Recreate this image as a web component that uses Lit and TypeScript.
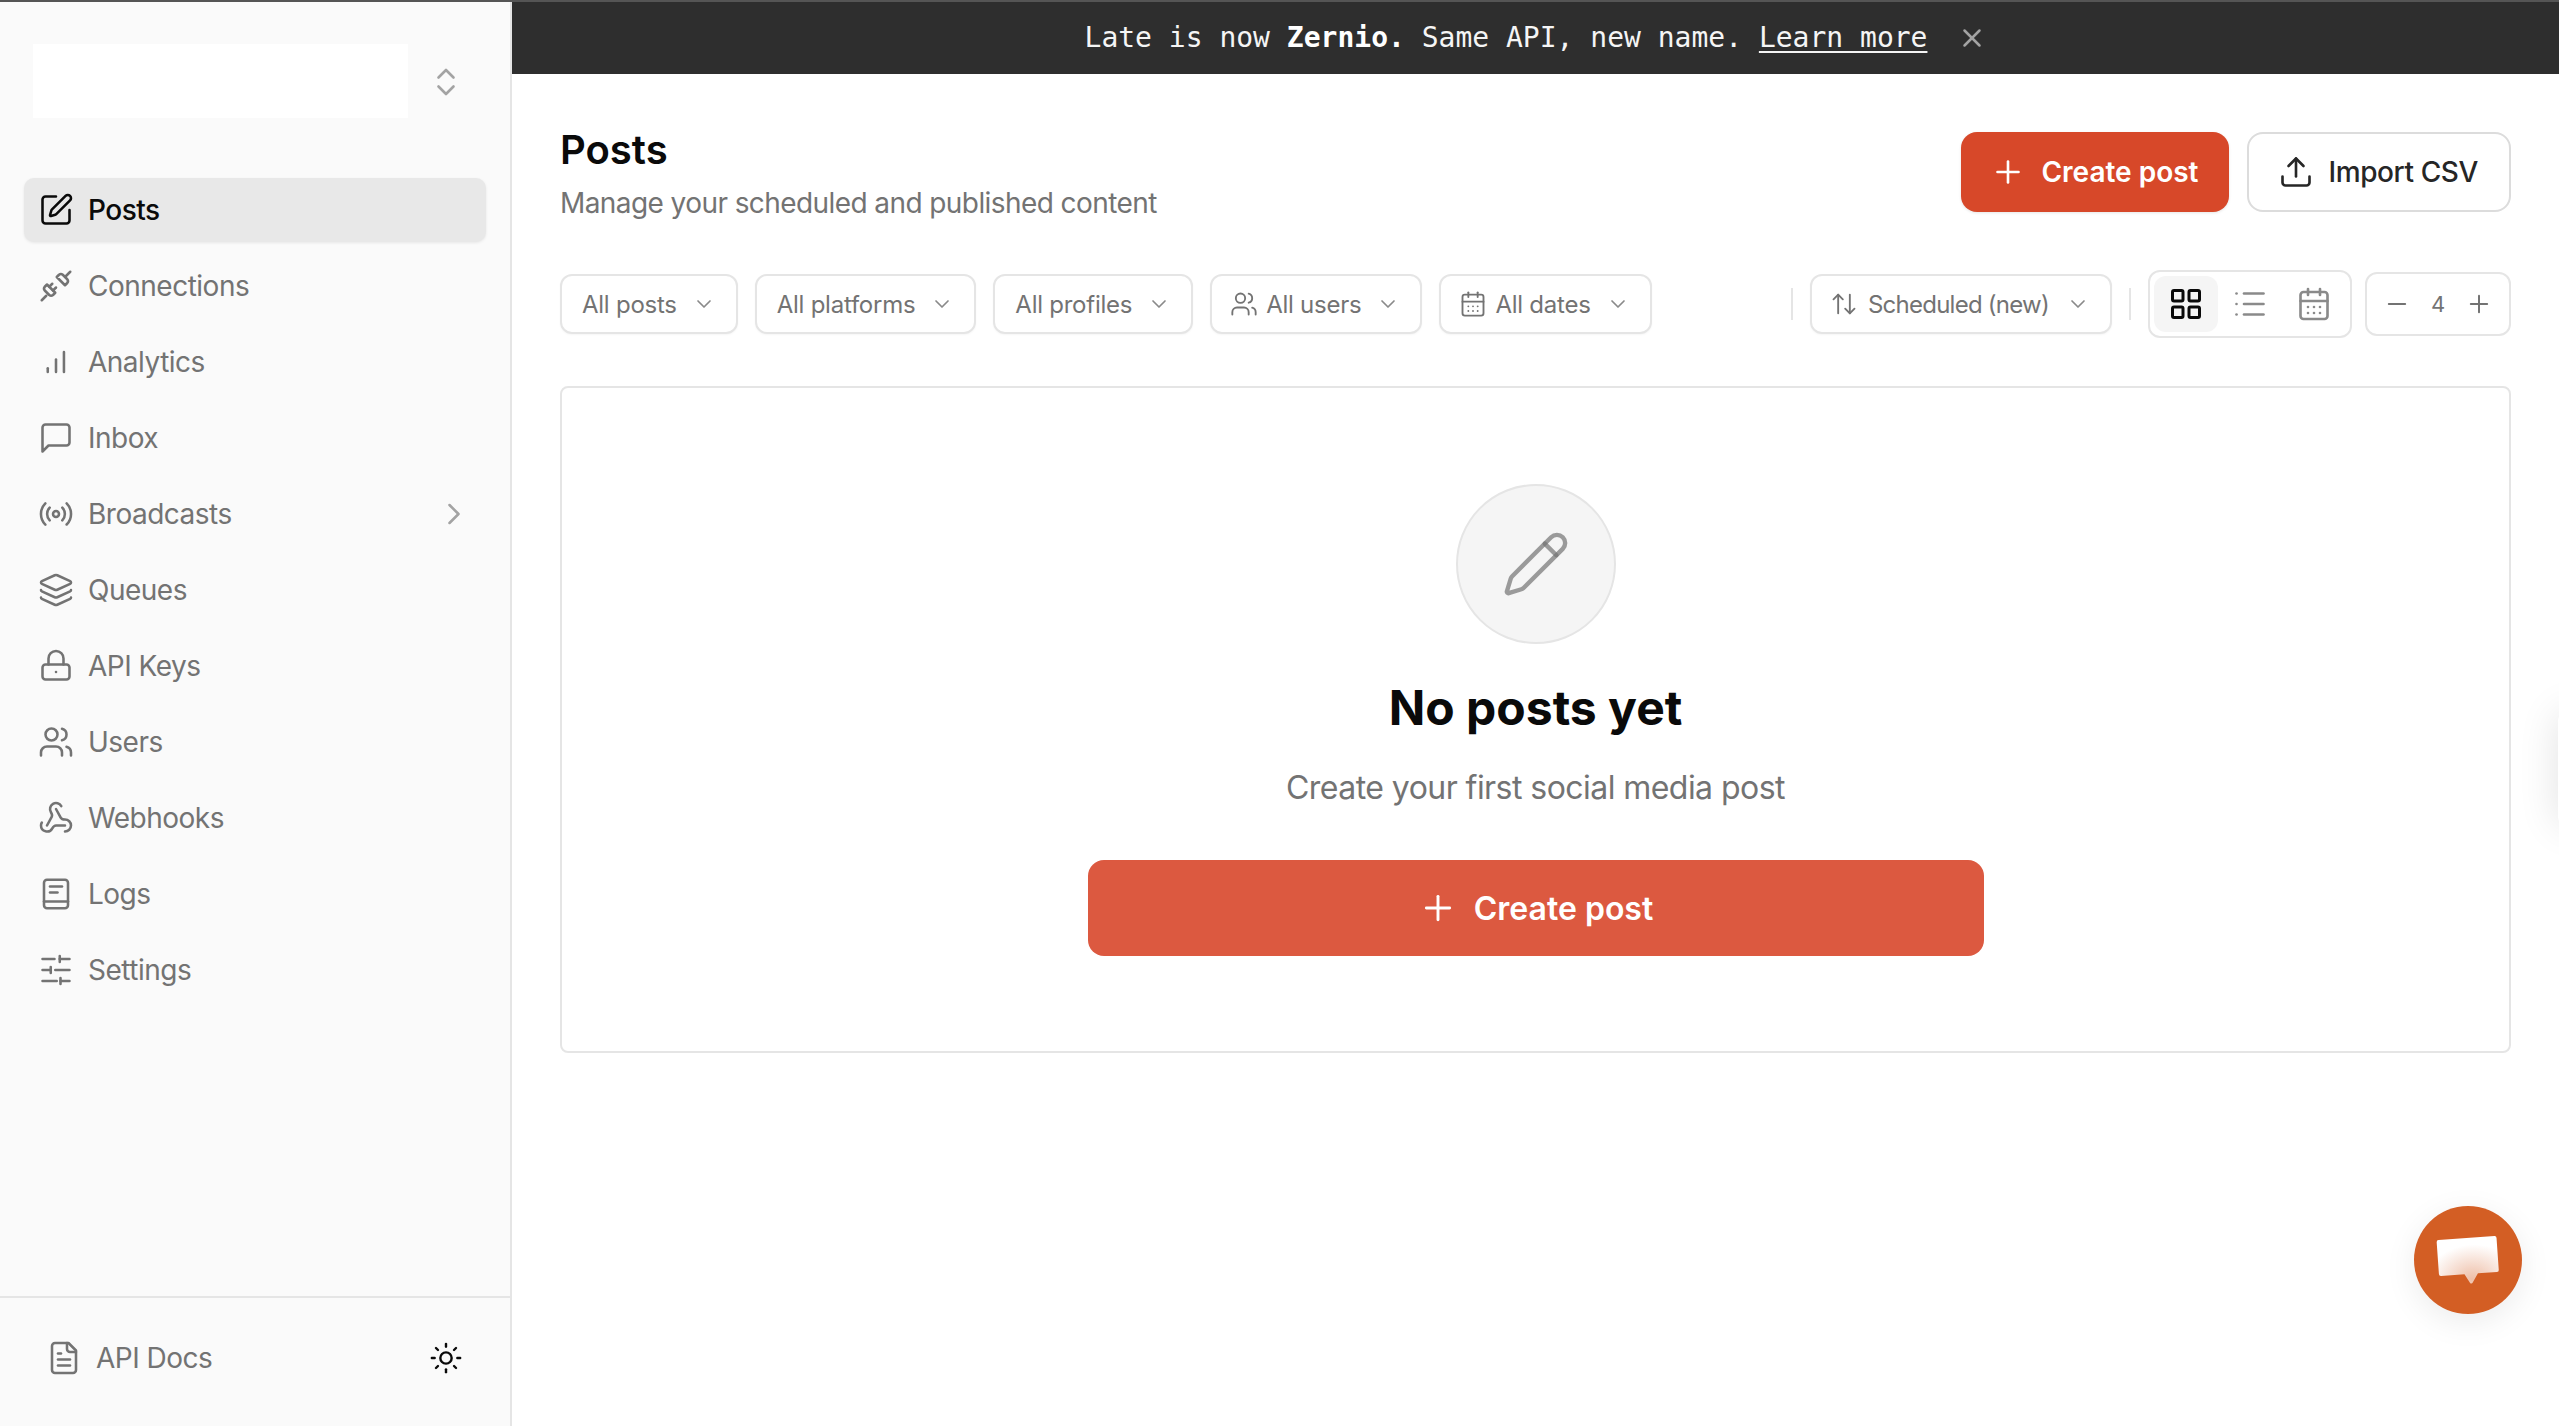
import { LitElement, html, svg, css, SVGTemplateResult } from 'lit';
import { customElement } from 'lit/decorators.js';

const icons: Record<string, SVGTemplateResult> = {
  pen: svg`<path d="M12 3H5a2 2 0 0 0-2 2v14a2 2 0 0 0 2 2h14a2 2 0 0 0 2-2v-7"/><path d="M18.375 2.625a1 1 0 0 1 3 3l-9.013 9.014a2 2 0 0 1-.853.505l-2.873.84a.5.5 0 0 1-.62-.62l.84-2.873a2 2 0 0 1 .506-.852z"/>`,
  plug: svg`<path d="M12.500 6l5.500 5.500 1.500-1.500a2 2 0 0 0 0-2.500l-3-3a2 2 0 0 0-2.500 0z"/><path d="M18.500 5.500l3-3"/><path d="M6 11l5.500 5.500-1.500 1.500a2 2 0 0 1-2.500 0l-3-3a2 2 0 0 1 0-2.500z"/><path d="M5.500 18.500l-3 3"/><path d="M7.500 12.500l2-2"/><path d="M10 15l2-2"/>`,
  chart: svg`<path d="M6.500 18.700v-2.600"/><path d="M12 18.700v-8.400"/><path d="M17.300 18.700V5.300"/>`,
  message: svg`<path d="M21 15a2 2 0 0 1-2 2H7l-4 4V5a2 2 0 0 1 2-2h14a2 2 0 0 1 2 2z"/>`,
  radio: svg`<path d="M4.9 19.1C1 15.2 1 8.8 4.9 4.9"/><path d="M7.8 16.2c-2.3-2.3-2.3-6.1 0-8.5"/><circle cx="12" cy="12" r="2"/><path d="M16.2 7.8c2.3 2.3 2.3 6.1 0 8.5"/><path d="M19.1 4.9C23 8.8 23 15.1 19.1 19"/>`,
  layers: svg`<path d="M12.83 2.18a2 2 0 0 0-1.66 0L2.6 6.08a1 1 0 0 0 0 1.83l8.58 3.91a2 2 0 0 0 1.66 0l8.58-3.9a1 1 0 0 0 0-1.83z"/><path d="M2 12a1 1 0 0 0 .58.91l8.6 3.91a2 2 0 0 0 1.65 0l8.58-3.9A1 1 0 0 0 22 12"/><path d="M2 17a1 1 0 0 0 .58.91l8.6 3.91a2 2 0 0 0 1.65 0l8.58-3.9A1 1 0 0 0 22 17"/>`,
  lock: svg`<rect x="3" y="11" width="18" height="10" rx="2"/><path d="M7 11V7a5 5 0 0 1 10 0v4"/><path d="M12 16h.01"/>`,
  users: svg`<path d="M16 21v-2a4 4 0 0 0-4-4H6a4 4 0 0 0-4 4v2"/><circle cx="9" cy="7" r="4"/><path d="M22 21v-2a4 4 0 0 0-3-3.87"/><path d="M16 3.13a4 4 0 0 1 0 7.75"/>`,
  webhook: svg`<path d="M18 16.98h-5.99c-1.1 0-1.95.94-2.48 1.9A4 4 0 0 1 2 17c.01-.7.2-1.4.57-2"/><path d="m6 17 3.13-5.78c.53-.97.1-2.18-.5-3.1a4 4 0 1 1 6.89-4.06"/><path d="m12 6 3.13 5.73C15.66 12.7 16.9 13 18 13a4 4 0 0 1 0 8"/>`,
  logs: svg`<rect x="4" y="2.500" width="16" height="19" rx="2"/><path d="M4 17h16"/><path d="M8 7h8"/><path d="M8 11h5"/>`,
  sliders: svg`<path d="M3 4.700h8"/><path d="M14.500 2.700v4"/><path d="M14.500 4.700h6.500"/><path d="M3 12h5.500"/><path d="M8.500 10v4"/><path d="M11.500 12h9.500"/><path d="M3 19.300h9.500"/><path d="M15 17.300v4"/><path d="M15 19.300h6"/>`,
  doc: svg`<path d="M15 2H6a2 2 0 0 0-2 2v16a2 2 0 0 0 2 2h12a2 2 0 0 0 2-2V7z"/><path d="M14 2v4a2 2 0 0 0 2 2h4"/><path d="M10 9H8"/><path d="M16 13H8"/><path d="M16 17H8"/>`,
  sun: svg`<circle cx="12" cy="12" r="4"/><path d="M12 2v2"/><path d="M12 20v2"/><path d="m4.93 4.93 1.41 1.41"/><path d="m17.66 17.66 1.41 1.41"/><path d="M2 12h2"/><path d="M20 12h2"/><path d="m6.34 17.66-1.41 1.41"/><path d="m19.07 4.93-1.41 1.41"/>`,
  updown: svg`<path d="m7 9 5-5 5 5"/><path d="m7 15 5 5 5-5"/>`,
  right: svg`<path d="m9 18 6-6-6-6"/>`,
  down: svg`<path d="m6 9 6 6 6-6"/>`,
  x: svg`<path d="M18 6 6 18"/><path d="m6 6 12 12"/>`,
  plus: svg`<path d="M5 12h14"/><path d="M12 5v14"/>`,
  minus: svg`<path d="M5 12h14"/>`,
  upload: svg`<path d="M21 15v4a2 2 0 0 1-2 2H5a2 2 0 0 1-2-2v-4"/><path d="m17 8-5-5-5 5"/><path d="M12 3v12"/>`,
  calendar: svg`<path d="M8 2v4"/><path d="M16 2v4"/><rect x="3" y="4" width="18" height="18" rx="2"/><path d="M3 10h18"/><path d="M8 14h.01"/><path d="M12 14h.01"/><path d="M16 14h.01"/><path d="M8 18h.01"/><path d="M12 18h.01"/><path d="M16 18h.01"/>`,
  sort: svg`<path d="m21 16-4 4-4-4"/><path d="M17 20V4"/><path d="m3 8 4-4 4 4"/><path d="M7 4v16"/>`,
  grid: svg`<rect x="3" y="3" width="7" height="7" rx="1"/><rect x="14" y="3" width="7" height="7" rx="1"/><rect x="14" y="14" width="7" height="7" rx="1"/><rect x="3" y="14" width="7" height="7" rx="1"/>`,
  list: svg`<path d="M3 5h.01"/><path d="M3 12h.01"/><path d="M3 19h.01"/><path d="M8 5h13"/><path d="M8 12h13"/><path d="M8 19h13"/>`,
  pencil: svg`<path d="M21.174 6.812a1 1 0 0 0-3.986-3.987L3.842 16.174a2 2 0 0 0-.5.83l-1.321 4.352a.5.5 0 0 0 .623.622l4.353-1.32a2 2 0 0 0 .83-.497z"/><path d="m15 5 4 4"/>`,
};

const icon = (name: string, cls = '') =>
  html`<svg class="icon ${cls}" viewBox="0 0 24 24" fill="none" stroke="currentColor" stroke-width="2" stroke-linecap="round" stroke-linejoin="round">${icons[name]}</svg>`;

const navItems = [
  { label: 'Posts', icon: 'pen', active: true },
  { label: 'Connections', icon: 'plug' },
  { label: 'Analytics', icon: 'chart' },
  { label: 'Inbox', icon: 'message' },
  { label: 'Broadcasts', icon: 'radio', more: true },
  { label: 'Queues', icon: 'layers' },
  { label: 'API Keys', icon: 'lock' },
  { label: 'Users', icon: 'users' },
  { label: 'Webhooks', icon: 'webhook' },
  { label: 'Logs', icon: 'logs' },
  { label: 'Settings', icon: 'sliders' },
];

const filters = [
  { label: 'All posts' },
  { label: 'All platforms' },
  { label: 'All profiles' },
  { label: 'All users', icon: 'users' },
  { label: 'All dates', icon: 'calendar' },
];

@customElement('app-root')
export class AppRoot extends LitElement {
  static styles = css`
    :host {
      display: block;
      height: 1426px;
      overflow: hidden;
      background: #fff;
      color: #0a0a0a;
      font-family: Inter, 'Liberation Sans', sans-serif;
      border-top: 2px solid #555;
      box-sizing: border-box;
    }

    * {
      box-sizing: border-box;
    }

    .icon {
      width: 36px;
      height: 36px;
      flex: none;
      display: block;
    }

    .icon.sm {
      width: 28px;
      height: 28px;
    }

    .layout {
      display: flex;
      height: 100%;
    }

    .sidebar {
      width: 512px;
      flex: none;
      display: flex;
      flex-direction: column;
      background: #fafafa;
      border-right: 2px solid #e5e5e5;
    }

    .brand {
      display: flex;
      align-items: flex-start;
      padding: 42px 0 0 33px;
      height: 176px;
    }

    .logo {
      width: 375px;
      height: 74px;
      background: #fff;
    }

    .switch {
      margin: 20px 0 0 20px;
      color: #a3a3a3;
      stroke-width: 1.75;
    }

    .nav {
      flex: 1;
      display: flex;
      flex-direction: column;
      gap: 12px;
      padding: 0 24px;
    }

    .item {
      height: 64px;
      display: flex;
      align-items: center;
      gap: 14px;
      padding: 0 14px;
      border-radius: 10px;
      font-size: 28px;
      letter-spacing: -0.5px;
      color: #737373;
    }

    .item .icon {
      stroke-width: 1.7;
    }

    .item.active {
      background: #e8e8e8;
      color: #0a0a0a;
      font-weight: 500;
      box-shadow: 0 1px 3px rgba(0, 0, 0, 0.08);
    }

    .item .more {
      margin-left: auto;
      color: #a3a3a3;
    }

    .foot {
      height: 130px;
      border-top: 2px solid #e5e5e5;
      display: flex;
      align-items: center;
      padding: 0 47px 8px 46px;
      font-size: 28px;
      letter-spacing: -0.5px;
      color: #737373;
      gap: 14px;
    }

    .foot .icon {
      stroke-width: 1.7;
    }

    .foot .sun {
      width: 34px;
      height: 34px;
      margin-left: auto;
      color: #0a0a0a;
    }

    .main {
      flex: 1;
      min-width: 0;
      display: flex;
      flex-direction: column;
    }

    .banner {
      height: 72px;
      flex: none;
      display: flex;
      align-items: center;
      justify-content: center;
      gap: 30px;
      padding: 0 0 1px 1px;
      background: #2e2e2e;
      color: #f5f5f5;
      font-family: 'DejaVu Sans Mono', monospace;
      font-size: 28px;
    }

    .banner b {
      color: #fff;
    }

    .banner a {
      color: inherit;
      text-decoration: underline;
      text-underline-offset: 4px;
    }

    .banner .icon {
      width: 30px;
      height: 30px;
      color: #a3a3a3;
    }

    .content {
      padding: 58px 48px 0;
    }

    .header {
      display: flex;
      justify-content: space-between;
      align-items: flex-start;
      height: 80px;
    }

    h1 {
      margin: -4px 0 0;
      font-size: 40px;
      line-height: 44px;
      font-weight: 600;
    }

    .subtitle {
      margin: 11px 0 0;
      font-size: 28px;
      line-height: 40px;
      letter-spacing: -0.58px;
      color: #737373;
    }

    .actions {
      display: flex;
      gap: 18px;
    }

    .btn {
      height: 80px;
      display: flex;
      align-items: center;
      border-radius: 16px;
      font-size: 28px;
    }

    .btn .icon {
      stroke-width: 1.75;
    }

    .btn.primary {
      gap: 15px;
      padding: 0 30px 0 29px;
      background: #d74829;
      color: #fff;
      font-weight: 600;
      box-shadow: 0 1px 3px rgba(0, 0, 0, 0.1);
    }

    .btn.outline {
      gap: 15px;
      padding: 0 31px 0 29px;
      background: #fff;
      border: 2px solid #dcdcdc;
      color: #262626;
      font-weight: 500;
      letter-spacing: -0.4px;
    }

    .toolbar {
      display: flex;
      align-items: center;
      height: 68px;
      margin-top: 58px;
      gap: 17px;
    }

    .select {
      height: 60px;
      display: flex;
      align-items: center;
      gap: 8px;
      padding: 0 20px;
      background: #fff;
      border: 2px solid #e5e5e5;
      border-radius: 12px;
      font-size: 24px;
      letter-spacing: -0.25px;
      color: #737373;
      box-shadow: 0 1px 2px rgba(0, 0, 0, 0.04);
    }

    .select .icon.sm {
      stroke-width: 1.6;
    }

    .select.with-icon {
      padding-left: 18px;
    }

    .select.sort {
      gap: 10px;
      letter-spacing: -0.75px;
    }

    .select .chev {
      width: 24px;
      height: 24px;
      margin-left: 7px;
      color: #8a8a8a;
      stroke-width: 1.7;
    }

    .spacer {
      flex: 1;
    }

    .sep {
      width: 2px;
      height: 32px;
      background: #e5e5e5;
    }

    .views {
      height: 68px;
      display: flex;
      padding: 4px;
      background: #fff;
      border: 2px solid #e5e5e5;
      border-radius: 12px;
      color: #8a8a8a;
    }

    .views span {
      width: 64px;
      display: flex;
      align-items: center;
      justify-content: center;
      border-radius: 12px;
    }

    .views .icon {
      stroke-width: 1.75;
    }

    .views .on {
      background: #f5f5f5;
      color: #0a0a0a;
    }

    .views .on .icon {
      stroke-width: 2;
    }

    .count {
      height: 64px;
      width: 146px;
      margin-left: -4px;
      display: flex;
      align-items: center;
      justify-content: space-between;
      padding: 0 16px;
      background: #fff;
      border: 2px solid #e5e5e5;
      border-radius: 12px;
      font-size: 22px;
      color: #737373;
    }

    .count .icon {
      stroke-width: 1.7;
    }

    .card {
      height: 667px;
      margin-top: 48px;
      padding-top: 96px;
      display: flex;
      flex-direction: column;
      align-items: center;
      border: 2px solid #e5e5e5;
      border-radius: 8px;
    }

    .badge {
      width: 160px;
      height: 160px;
      display: flex;
      align-items: center;
      justify-content: center;
      background: #f5f5f5;
      border: 2px solid #e5e5e5;
      border-radius: 50%;
      color: rgba(115, 115, 115, 0.7);
    }

    .badge .icon {
      width: 70px;
      height: 70px;
      stroke-width: 1.5;
    }

    h2 {
      margin: 32px 0 0;
      font-size: 48px;
      line-height: 64px;
      font-weight: 700;
    }

    .hint {
      margin: 26px 0 0;
      font-size: 32px;
      line-height: 44px;
      letter-spacing: -0.55px;
      color: #737373;
    }

    .cta {
      width: 896px;
      height: 96px;
      margin-top: 50px;
      display: flex;
      align-items: center;
      justify-content: center;
      gap: 16px;
      border-radius: 16px;
      background: #dc5940;
      color: #fff;
      font-size: 32px;
      font-weight: 600;
    }

    .cta .icon {
      width: 40px;
      height: 40px;
      stroke-width: 1.75;
    }

    .chat {
      position: fixed;
      left: 2414px;
      top: 1206px;
      width: 108px;
      height: 108px;
      border-radius: 50%;
      background: #d35e24;
      box-shadow: 0 8px 32px rgba(0, 0, 0, 0.08);
    }

    .chat svg {
      display: block;
    }

    .edge {
      position: fixed;
      left: 2558px;
      top: 713px;
      width: 40px;
      height: 112px;
      border-radius: 8px;
      background: #fff;
      box-shadow: 0 0 40px rgba(0, 0, 0, 0.12);
    }
  `;

  render() {
    return html`
      <div class="layout">
        <aside class="sidebar">
          <div class="brand">
            <div class="logo"></div>
            ${icon('updown', 'switch')}
          </div>
          <nav class="nav">
            ${navItems.map(
              (n) => html`
                <div class="item ${n.active ? 'active' : ''}">
                  ${icon(n.icon)}
                  <span>${n.label}</span>
                  ${n.more ? icon('right', 'more') : ''}
                </div>
              `
            )}
          </nav>
          <div class="foot">
            ${icon('doc')}
            <span>API Docs</span>
            ${icon('sun', 'sun')}
          </div>
        </aside>
        <main class="main">
          <div class="banner">
            <span>Late is now <b>Zernio.</b> Same API, new name. <a>Learn more</a></span>
            ${icon('x')}
          </div>
          <div class="content">
            <header class="header">
              <div>
                <h1>Posts</h1>
                <p class="subtitle">Manage your scheduled and published content</p>
              </div>
              <div class="actions">
                <div class="btn primary">${icon('plus')}Create post</div>
                <div class="btn outline">${icon('upload')}Import CSV</div>
              </div>
            </header>
            <div class="toolbar">
              ${filters.map(
                (f) => html`
                  <div class="select ${f.icon ? 'with-icon' : ''}">
                    ${f.icon ? icon(f.icon, 'sm') : ''}
                    <span>${f.label}</span>
                    ${icon('down', 'chev')}
                  </div>
                `
              )}
              <div class="spacer"></div>
              <div class="sep"></div>
              <div class="select with-icon sort">
                ${icon('sort', 'sm')}
                <span>Scheduled (new)</span>
                ${icon('down', 'chev')}
              </div>
              <div class="sep"></div>
              <div class="views">
                <span class="on">${icon('grid')}</span>
                <span>${icon('list')}</span>
                <span>${icon('calendar')}</span>
              </div>
              <div class="count">
                ${icon('minus', 'sm')}
                <span>4</span>
                ${icon('plus', 'sm')}
              </div>
            </div>
            <section class="card">
              <div class="badge">${icon('pencil')}</div>
              <h2>No posts yet</h2>
              <p class="hint">Create your first social media post</p>
              <div class="cta">${icon('plus')}Create post</div>
            </section>
          </div>
        </main>
      </div>
      <div class="edge"></div>
      <div class="chat">
        <svg width="108" height="108" viewBox="0 0 108 108">
          <defs>
            <radialGradient id="bubble" cx="0.55" cy="0.9" r="0.75">
              <stop offset="0" stop-color="#eebfa8"></stop>
              <stop offset="1" stop-color="#fff"></stop>
            </radialGradient>
          </defs>
          <path
            transform="rotate(-4 54 54)"
            fill="url(#bubble)"
            d="M26 32h56a2 2 0 0 1 2 2v32a2 2 0 0 1-2 2H63l-6 9a1.5 1.5 0 0 1-2.5 0l-5-9H26a2 2 0 0 1-2-2V34a2 2 0 0 1 2-2z"
          ></path>
        </svg>
      </div>
    `;
  }
}
